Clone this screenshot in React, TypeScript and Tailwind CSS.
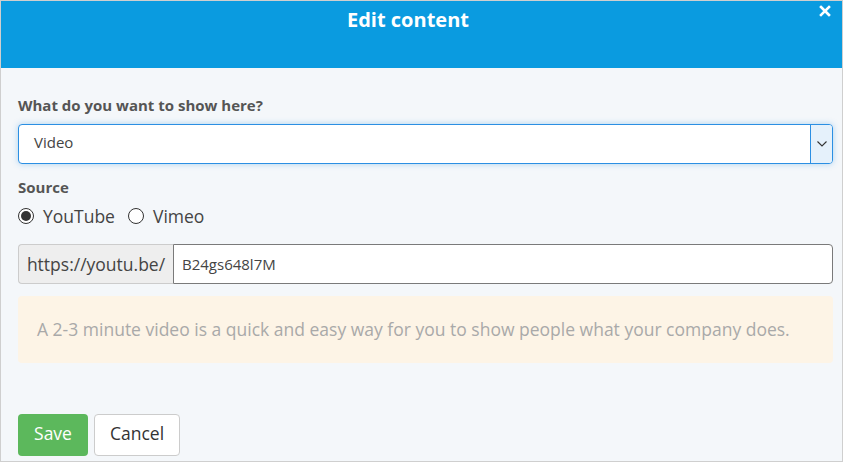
import React, { useState } from 'react';

export default function App() {
  const [source, setSource] = useState('youtube');

  return (
    <div className="w-[843px] h-[462px] flex flex-col border border-[#cfcfcf] bg-[#f4f7fa] overflow-hidden" style={{ fontFamily: '"Open Sans", sans-serif' }}>
      <div className="relative h-[67px] shrink-0 bg-[#0a9be0] flex justify-center pr-[27px]">
        <h2 className="mt-[5px] text-[20px] leading-[28px] font-bold text-white">Edit content</h2>
        <button className="absolute right-[11px] top-[4px] w-[12px] h-[12px]" aria-label="Close">
          <svg width="12" height="12" viewBox="0 0 12 12">
            <path d="M2 2L10 10M10 2L2 10" stroke="#fff" strokeWidth="2.6" strokeLinecap="square" />
          </svg>
        </button>
      </div>

      <div className="flex flex-col pl-[17px] pr-[9px] pt-[27px]">
        <label className="text-[15px] leading-[20px] font-bold text-[#555]">What do you want to show here?</label>
        <div className="mt-[9px] flex h-[40px] rounded-[4px] border border-[#2b8fe3] bg-white shadow-[0_0_6px_rgba(43,143,227,0.35)]">
          <div className="flex-1 flex items-center pl-[15px] pb-[3px] text-[15px] text-[#444]">Video</div>
          <div className="w-[22px] flex items-center justify-center border-l border-[#2b8fe3] bg-[#e5f1fb] rounded-r-[3px]">
            <svg width="10" height="6" viewBox="0 0 10 6" fill="none">
              <path d="M0.5 0.5L5 5L9.5 0.5" stroke="#333" strokeWidth="1.1" />
            </svg>
          </div>
        </div>

        <label className="mt-[13px] text-[15px] leading-[20px] font-bold text-[#555]">Source</label>
        <div className="mt-[8px] flex items-center text-[17.5px] leading-[22px] text-[#444]">
          <label className="flex items-center gap-[9px] cursor-pointer" onClick={() => setSource('youtube')}>
            <Radio checked={source === 'youtube'} />
            <span>YouTube</span>
          </label>
          <label className="ml-[13px] flex items-center gap-[9px] cursor-pointer" onClick={() => setSource('vimeo')}>
            <Radio checked={source === 'vimeo'} />
            <span>Vimeo</span>
          </label>
        </div>

        <div className="mt-[17px] flex h-[40px]">
          <div className="w-[155px] flex items-center justify-center rounded-l-[4px] border border-r-0 border-[#ccc] bg-[#eee] text-[17.5px] text-[#444]">
            https://youtu.be/
          </div>
          <div className="flex-1 flex items-center pl-[8px] rounded-r-[4px] border border-[#7a7a7a] bg-white text-[15px] text-[#444]">
            B24gs648l7M
          </div>
        </div>

        <div className="mt-[12px] h-[67px] flex items-center px-[19px] rounded-[4px] bg-[#fdf4e6] text-[17.5px] text-[#a9a9a9]">
          A 2-3 minute video is a quick and easy way for you to show people what your company does.
        </div>

        <div className="mt-[51px] flex gap-[6px]">
          <button className="h-[42px] w-[70px] pb-[4px] rounded-[4px] bg-[#5cb85c] text-white text-[17.5px]">Save</button>
          <button className="h-[42px] w-[86px] pb-[4px] rounded-[4px] border border-[#ccc] bg-white text-[#333] text-[17.5px]">Cancel</button>
        </div>
      </div>
    </div>
  );
}

function Radio({ checked }: { checked: boolean }) {
  return (
    <span className="w-[16px] h-[16px] rounded-full border border-[#333] bg-white flex items-center justify-center">
      {checked && <span className="w-[10px] h-[10px] rounded-full bg-[#333]" />}
    </span>
  );
}
